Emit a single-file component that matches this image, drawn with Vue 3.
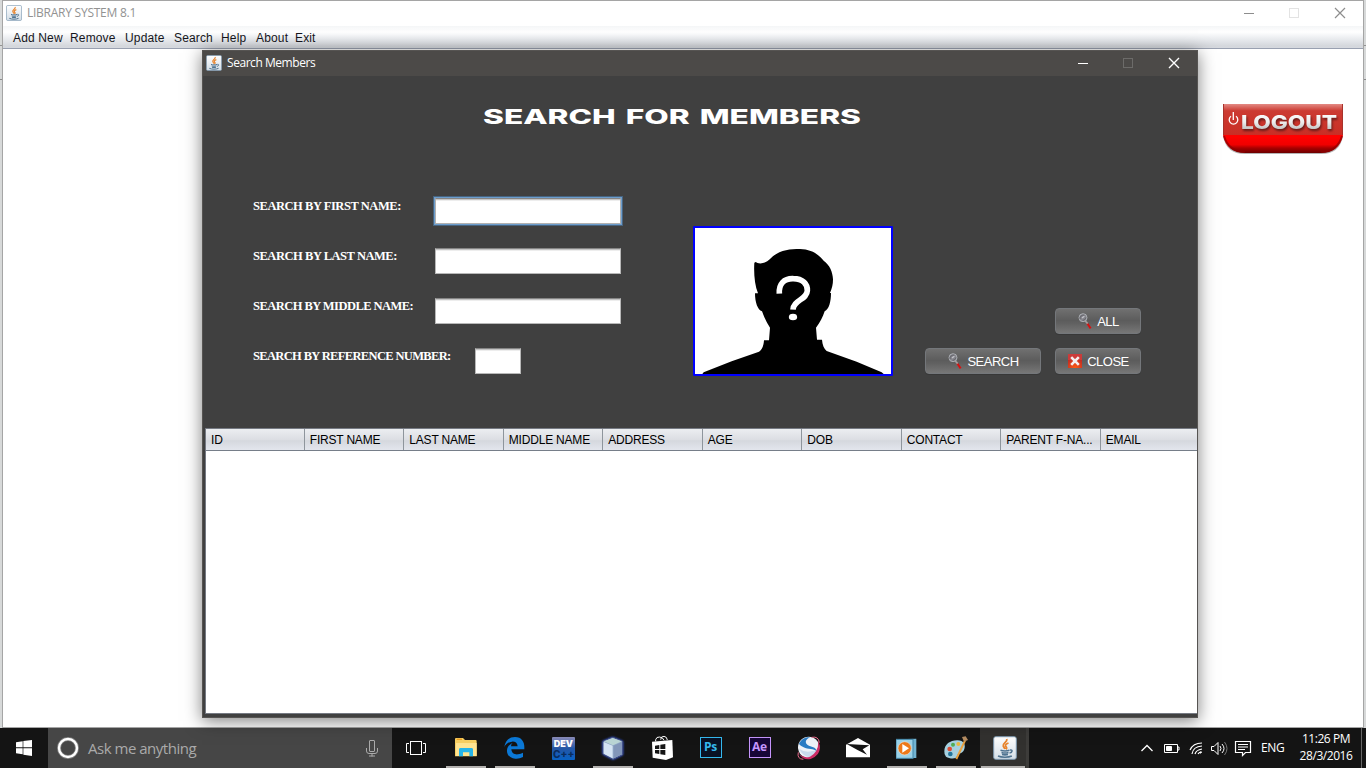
<script setup>
const menus = [
  { name: 'Add New', width: 57 },
  { name: 'Remove', width: 55 },
  { name: 'Update', width: 49 },
  { name: 'Search', width: 47 },
  { name: 'Help', width: 35 },
  { name: 'About', width: 39 },
  { name: 'Exit', width: 30 },
]
const fields = [
  { label: 'SEARCH BY FIRST NAME:', tracking: -0.45, focused: true },
  { label: 'SEARCH BY LAST NAME:', tracking: -0.46 },
  { label: 'SEARCH BY MIDDLE NAME:', tracking: -0.54 },
  { label: 'SEARCH BY REFERENCE NUMBER:', tracking: -0.65, short: true },
]
const columns = ['ID', 'FIRST NAME', 'LAST NAME', 'MIDDLE NAME', 'ADDRESS', 'AGE', 'DOB', 'CONTACT', 'PARENT F-NA...', 'EMAIL']
</script>

<template>
  <div class="desktop">
    <svg class="defs" width="0" height="0" aria-hidden="true">
      <defs>
        <linearGradient id="tile" x1="0" y1="0" x2="0" y2="1">
          <stop offset="0" stop-color="#fff" /><stop offset="1" stop-color="#d3dde6" />
        </linearGradient>
        <linearGradient id="sky" x1="0" y1="0" x2="0" y2="1">
          <stop offset="0" stop-color="#8b8cb9" /><stop offset=".5" stop-color="#2456a5" /><stop offset="1" stop-color="#0862c4" />
        </linearGradient>
        <linearGradient id="steel" x1="0" y1="0" x2="0" y2="1">
          <stop offset="0" stop-color="#fff" /><stop offset=".5" stop-color="#eee" /><stop offset="1" stop-color="#aaa" />
        </linearGradient>
        <radialGradient id="ember" cx=".5" cy="1" r=".8">
          <stop offset="0" stop-color="#ff5a10" /><stop offset="1" stop-color="#b92626" />
        </radialGradient>
        <symbol id="java" viewBox="0 0 24 24">
          <rect x=".7" y=".7" width="22.6" height="22.6" rx="2" fill="url(#tile)" stroke="#7f9cb3" stroke-width="1" />
          <path d="M13.8 3c1 3-4.6 4.200-3.600 7 .4 1.200 1.500 2 1.800 3M15.500 7c-3 1-4 2.500-2.200 4.200.6.700.3 1.400-.4 2" fill="none" stroke="#e8842c" stroke-width="1.800" />
          <path d="M7.500 14.200c2.500.8 6.500.8 9 0M8.500 16.500c2 .7 4.800.7 7 0M9 18.500c2 .5 4 .5 6 0M17 14c3-.5 2.600 2.500-.5 3M5 20c3.500 1.700 10.500 1.600 13.800 0" fill="none" stroke="#4f7390" stroke-width="1.500" />
        </symbol>
        <symbol id="lens" viewBox="0 0 42 48">
          <path d="M27 30L38 46" stroke="#d81010" stroke-width="6" />
          <path d="M22 24l7 8" stroke="#a0a0a0" stroke-width="5" />
          <circle cx="15" cy="14" r="12" fill="#85858c" stroke="#a9acb1" stroke-width="3" />
          <path d="M6 18c-1-8 5-12 13-12M14 22c5 0 8-3 9-8" fill="none" stroke="#5c5c62" stroke-width="2.500" />
          <path d="M12 15l7-5" stroke="#c5c5ca" stroke-width="3.500" />
        </symbol>
      </defs>
    </svg>

    <main class="window">
      <header class="titlebar">
        <svg class="app-icon"><use href="#java" /></svg>
        <span class="window-title">LIBRARY SYSTEM 8.1</span>
        <svg class="controls" width="102" height="12" viewBox="0 0 102 12" fill="none">
          <path d="M0 6.500h10" stroke="#8d8d8d" />
          <rect x="45.500" y="1.500" width="9" height="9" stroke="#e3e3e3" />
          <path d="M91 1l10 10M101 1L91 11" stroke="#8d8d8d" stroke-width="1.200" />
        </svg>
      </header>
      <nav class="menubar">
        <span v-for="m in menus" :key="m.name" :style="{ width: m.width + 'px' }">{{ m.name }}</span>
      </nav>
      <div class="workspace">
        <button class="logout" aria-label="Logout">
          <svg width="120" height="50" viewBox="0 0 120 50">
            <defs>
              <linearGradient id="bottom" x1="0" y1="0" x2="0" y2="1">
                <stop offset="0" stop-color="#f00" /><stop offset=".68" stop-color="#f00" /><stop offset=".83" stop-color="#f00000" /><stop offset=".9" stop-color="#a80000" /><stop offset="1" stop-color="#6c0000" />
              </linearGradient>
              <linearGradient id="gloss" x1="0" y1="0" x2="0" y2="1">
                <stop offset="0" stop-color="#e38a84" /><stop offset=".22" stop-color="#cc3b32" /><stop offset="1" stop-color="#c92e25" />
              </linearGradient>
            </defs>
            <path d="M0 0H120V32Q117 50 98 50H22Q3 50 0 32Z" fill="#777" opacity=".55" />
            <path d="M0 0H120V31Q116 49 98 49H22Q4 49 0 31Z" fill="url(#bottom)" />
            <path d="M1 32Q5 47 22 48M119 32Q115 47 98 48" fill="none" stroke="#8e0000" stroke-width="2" opacity=".7" />
            <path d="M0 0H120V31H0Z" fill="url(#gloss)" />
            <path d="M.5 0V31M119.500 0V31" stroke="#a8322b" />
            <path d="M8 12.300a4.300 4.300 0 1 0 5 0M10.300 8v8" fill="none" stroke="#fff" stroke-width="1.300" />
            <text class="logout-text" x="18" y="24.500" textLength="96" lengthAdjust="spacingAndGlyphs">LOGOUT</text>
          </svg>
        </button>
      </div>
    </main>

    <section class="dialog">
      <header class="dialog-bar">
        <svg class="app-icon"><use href="#java" /></svg>
        <span class="dialog-title">Search Members</span>
        <svg class="controls" width="102" height="12" viewBox="0 0 102 12" fill="none">
          <path d="M0 6.500h10" stroke="#fff" />
          <rect x="45.500" y="1.500" width="9" height="9" stroke="#6c6b69" />
          <path d="M91 1l10 10M101 1L91 11" stroke="#fff" stroke-width="1.400" />
        </svg>
      </header>
      <h1 class="heading">
        <svg width="380" height="24" viewBox="0 0 380 24">
          <text x="0" y="20" textLength="378" lengthAdjust="spacingAndGlyphs">SEARCH FOR MEMBERS</text>
        </svg>
      </h1>
      <div class="search-area">
        <form class="fields" @submit.prevent>
          <label v-for="f in fields" :key="f.label" class="field" :class="{ short: f.short }">
            <span :style="{ letterSpacing: f.tracking + 'px' }">{{ f.label }}</span>
            <input type="text" :class="{ focused: f.focused }" />
          </label>
        </form>
        <svg class="photo" viewBox="30 24 588 438" preserveAspectRatio="none">
          <path d="M52 462L56 457L140 424L222 395C233 389 236 374 237 361H252L255 323C243 304 238 292 231 274C218 270 210 247 210 220H219C209 195 206 160 208 128L212 126Q217 131 230 130C242 128 251 122 262 110C287 90 315 87 345 87C376 88 397 99 416 122C434 135 443 155 444 178C444 194 441 204 435 219H438C438 245 432 268 419 274C413 292 406 306 393 323L396 359H411C412 374 417 386 425 393L515 425L590 457L596 462Z" />
          <path d="M283 221C281 192 297 175 325 176C353 176 368 192 367 212C366 239 325 240 324 269" fill="none" stroke="#fff" stroke-width="17" />
          <ellipse cx="324" cy="291" rx="12.500" ry="10" fill="#fff" />
        </svg>
        <div class="actions">
          <button class="btn all"><svg><use href="#lens" /></svg><span>ALL</span></button>
          <button class="btn find"><svg><use href="#lens" /></svg><span>SEARCH</span></button>
          <button class="btn close">
            <svg viewBox="0 0 14 14">
              <rect width="14" height="14" fill="url(#ember)" />
              <path d="M0 0h14v6H0z" fill="#d74a48" opacity=".6" />
              <path d="M3.200 3.200l7.600 7.600M10.800 3.200l-7.600 7.600" stroke="#f3eeee" stroke-width="2.600" />
            </svg>
            <span>CLOSE</span>
          </button>
        </div>
      </div>
      <div class="table">
        <div class="table-head">
          <span v-for="c in columns" :key="c">{{ c }}</span>
        </div>
      </div>
    </section>

    <footer class="taskbar">
      <div class="start">
        <svg width="16" height="16" viewBox="0 0 48 48" fill="#fff"><path d="M0 7L20 4V22H0zM22 3L48 0V22H22zM0 25H20V43L0 40zM22 25H48V48L22 44z" /></svg>
      </div>
      <div class="cortana">
        <svg width="22" height="22" viewBox="0 0 22 22"><circle cx="11" cy="11" r="9" fill="none" stroke="#bbb" stroke-width="4" opacity=".45" /><circle cx="11" cy="11" r="9" fill="none" stroke="#fff" stroke-width="2.400" /></svg>
        <span>Ask me anything</span>
        <svg class="mic" width="12" height="17" viewBox="0 0 12 17" fill="none" stroke="#aaa"><rect x="3.500" y=".5" width="5" height="11" rx=".5" /><path d="M.5 8v3q0 2.500 2.500 2.500h6q2.500 0 2.500-2.500V8M6 13.500v3M3 16h6" /></svg>
      </div>
      <div class="task view">
        <svg width="20" height="14" viewBox="0 0 20 14" fill="none" stroke="#fff"><rect x="4.500" y=".5" width="11" height="13" /><path d="M3 2.500H.5v9H3M17 2.500h2.500v9H17" /></svg>
      </div>
      <div class="task run">
        <svg width="22" height="20" viewBox="0 0 66 60"><path d="M0 3Q0 0 3 0H24L30 6H62Q65 6 65 10V55H0z" fill="#f7cf62" /><path d="M3 15H65V54H3z" fill="#ffe491" /><path d="M5 4h16" stroke="#ed9f22" stroke-width="4" /><path d="M12 55V34Q12 30 17 30H49Q54 30 54 34V55H43V43H24V55z" fill="#26b5e9" /></svg>
      </div>
      <div class="task run">
        <svg width="21" height="22" viewBox="0 0 63 66"><path d="M1 30C4 11 15 0 33 0C53 0 61 15 61 30V37H22C23 49 32 53 42 52Q51 51 57 47V60Q46 66 34 65C16 64 8 51 9 39C10 28 20 20 26 18Q21 21 21 28H41C40 17 32 13 24 14C13 15 5 22 1 30Z" fill="#0b78d6" /></svg>
      </div>
      <div class="task">
        <svg width="23" height="23" viewBox="0 0 69 69"><rect width="69" height="69" rx="3" fill="url(#sky)" /><text x="5" y="31" textLength="58" lengthAdjust="spacingAndGlyphs" font-size="27" font-weight="900" fill="#fff" font-family="Inter, sans-serif">DEV</text><text x="3" y="64" textLength="64" lengthAdjust="spacingAndGlyphs" font-size="31" font-weight="800" fill="#0a2c5d" font-family="Inter, sans-serif">C++</text></svg>
      </div>
      <div class="task run">
        <svg class="cube" width="22" height="23" viewBox="0 0 66 69"><path d="M3 13L32 1L62 13V53L33 67L3 51Z" fill="#8fa6c6" stroke="#3c4983" stroke-width="3" /><path d="M5 13L32 3L60 13L33 25Z" fill="#b9d4d4" /><path d="M5 15L32 26V64L5 50Z" fill="#d4e3f3" /><path d="M35 26L60 15V51L35 64Z" fill="#8296b9" /></svg>
      </div>
      <div class="task">
        <svg width="22" height="24" viewBox="0 0 66 72"><path d="M3 17L64 12L66 64L45 72L5 65Z" fill="#fff" /><path d="M14 16V11Q16 2 26 3T39 13M29 11Q30 0 39 1T49 12" fill="none" stroke="#fff" stroke-width="3" /><path d="M12 29L25 27V39H12zM28 26L43 24V39H28zM12 42H25V54L12 52zM28 42H43V57L28 55z" fill="#151515" /></svg>
      </div>
      <div class="task"><span class="adobe ps">Ps</span></div>
      <div class="task"><span class="adobe ae">Ae</span></div>
      <div class="task">
        <svg width="24" height="24" viewBox="0 0 72 72"><circle cx="35" cy="34" r="32" fill="#eef2f8" /><path d="M6 24C12 9 27 1 41 4C26 8 22 20 32 27C42 34 57 31 60 47C50 37 33 41 20 34Q10 29 6 24" fill="#2a7cc4" /><path d="M6 38Q24 51 46 45Q55 42 60 47Q54 62 39 64Q17 61 6 38" fill="#c9d9ec" /><path d="M64 14Q80 55 41 69Q19 74 6 54Q20 68 39 62Q65 49 64 14" fill="#cc2b65" /><path d="M44 4Q65 0 67 20M4 49Q-1 69 19 70" fill="none" stroke="#e86c8c" stroke-width="3" /></svg>
      </div>
      <div class="task">
        <svg width="24" height="20" viewBox="0 0 72 60"><path d="M0 20L36 0L72 20V58H0Z" fill="#fff" /><path d="M2 18L70 22L50 34L63 50L36 37Z" fill="#151515" /></svg>
      </div>
      <div class="task run">
        <svg width="21" height="21" viewBox="0 0 63 63"><path d="M8 4L61 2V60H8Z" fill="#72b4d2" /><rect y="4" width="51" height="57" fill="#9bd2e8" stroke="#4386a8" stroke-width="3" /><circle cx="26" cy="31" r="20" fill="#ed7919" stroke="#e7e4da" stroke-width="2" /><path d="M19 18V44L39 31Z" fill="#fff" /></svg>
      </div>
      <div class="task run">
        <svg width="24" height="24" viewBox="0 0 72 72"><path d="M1 46C1 24 20 12 41 13C59 13 67 27 60 42C55 55 40 50 39 61C37 70 17 69 6 62Q0 56 1 46" fill="#a6d0df" /><circle cx="17" cy="39" r="7" fill="#dd4d35" /><circle cx="27" cy="26" r="6" fill="#50ad54" /><circle cx="43" cy="24" r="6" fill="#eab740" /><circle cx="19" cy="54" r="7" fill="#23769d" /><path d="M63 14L37 69" stroke="#e9a13f" stroke-width="6" /><path d="M54 3L65 1L72 12L60 17Z" fill="#b58c61" /></svg>
      </div>
      <div class="task active"><svg width="24" height="24"><use href="#java" /></svg></div>
      <div class="tray">
        <svg width="128" height="40" viewBox="0 0 128 40" fill="none" stroke="#fff">
          <path d="M8.500 23L14 17.500L19.500 23" stroke-width="1.300" />
          <path d="M31.500 16.500h13v8h-13zM45 19h1v3h-1" /><path d="M33.500 18.500h5v4h-5z" fill="#fff" />
          <path d="M57 22Q60 15 69 15M59 26Q60 18.500 69 18M62 26Q63 22 69 21M65 26Q66 24 69 24" stroke-width="1.200" /><path d="M67 24h1v1h-1z" fill="#fff" />
          <path d="M78.500 18.500h2.500l4-4v12l-4-4h-2.500zM87 18q2 2.500 0 5M89 16q4 4.500 0 9" /><path d="M91.500 14q5 6.500 0 13" stroke="#777" />
          <path d="M102.500 13.500h15v11h-5l-3 3v-3h-7zM105 16.500h10M105 19h10M105 21.500h7" stroke-width="1.200" />
        </svg>
        <span class="lang">ENG</span>
        <span class="clock"><span>11:26 PM</span><span>28/3/2016</span></span>
      </div>
    </footer>
  </div>
</template>

<style>
html, body { margin: 0; overflow: hidden; }
</style>

<style scoped>
* { box-sizing: border-box; }
.desktop {
  position: relative; width: 1366px; height: 768px; overflow: hidden;
  background: linear-gradient(transparent 45px, #929292 45px, #929292 46px, transparent 46px, transparent 79px, #8b8b8b 79px, #8b8b8b 80px, transparent 80px) #d7d9d9;
  font: 12px "Liberation Sans", Arial, sans-serif; display: flex; flex-direction: column; padding-left: 2px;
}
.defs { position: absolute; }
button, input { font: inherit; border: 0; padding: 0; margin: 0; }
svg { display: block; flex: none; }
.window { width: 1362px; height: 728px; border: 1px solid #a5a5a5; background: #fff; display: flex; flex-direction: column; flex: none; }
.titlebar { height: 25px; display: flex; align-items: center; padding: 0 0 1px 3px; }
.app-icon { width: 16px; height: 16px; }
.window-title { font: 12px "Open Sans", "Noto Sans", sans-serif; color: #929292; margin-left: 5px; letter-spacing: -.25px; line-height: 24px; }
.controls { margin-left: auto; }
.titlebar .controls { margin-right: 17px; }
.menubar { height: 23px; flex: none; display: flex; padding: 1px 0 0 10px; color: #16161c; line-height: 22px; letter-spacing: .15px; background: linear-gradient(#f4f6f7 0, #fff 6px, #eceef1 12px, #d4d7dc 20px, #d6d9df 22px); border-bottom: 1px solid #99a0b0; }
.workspace { flex: 1; display: flex; justify-content: flex-end; padding: 55px 20px 0 0; }
.logout { width: 120px; height: 50px; background: none; }
.logout-text { font: 800 19px Inter, sans-serif; fill: url(#steel); filter: drop-shadow(1px 2px 1px #651b18); }

.dialog { position: absolute; left: 202px; top: 50px; width: 996px; height: 668px; background: #404040; border: 1px solid #565452; box-shadow: 0 3px 16px rgba(0, 0, 0, .5); display: flex; flex-direction: column; }
.dialog-bar { height: 25px; flex: none; display: flex; align-items: center; padding: 0 0 2px 3px; background: #4c4a48; }
.dialog-title { font: 12px/23px "Open Sans", "Noto Sans", sans-serif; color: #fff; margin-left: 5px; letter-spacing: -.45px; }
.dialog-bar .controls { margin-right: 17px; }
.heading { margin: 28px 0 0 280px; height: 24px; flex: none; }
.heading text { font: 800 20.500px Inter, sans-serif; fill: #fff; word-spacing: 2px; }
.search-area { display: flex; height: 300px; flex: none; }
.fields { width: 490px; padding: 70px 0 0 50px; display: flex; flex-direction: column; gap: 24px; }
.field { height: 26px; display: flex; }
.field span { width: 182px; font: bold 12.500px/17px "Liberation Serif", serif; color: #fff; white-space: nowrap; }
.field input { width: 186px; height: 26px; background: #fff; border: 1px solid #b8b8b8; border-top-color: #858585; box-shadow: inset 0 1px #c5c5c5, inset 0 2px #ededed; outline: none; }
.field input.focused { border: 1px solid #b0b0b0; border-top-color: #858585; box-shadow: 0 0 0 1px #6c9dcd, 0 0 0 2px #48647f, inset 0 1px #c5c5c5, inset 0 2px #ededed; }
.field.short span { width: 222px; }
.field.short input { width: 46px; }
.photo { width: 200px; height: 150px; margin-top: 98px; border: 2px solid #00f; background: #fff; border-radius: 1px; }
.actions { margin: 180px 0 0 32px; width: 216px; height: 66px; display: grid; grid-template-columns: 116px 86px; gap: 14px; grid-template-rows: 26px 26px; }
.all { grid-column: 2; }
.btn { display: flex; align-items: center; justify-content: center; gap: 5px; height: 26px; color: #fff; font-size: 13px; letter-spacing: -.5px; border: 1px solid #74777b; border-radius: 4px; background: linear-gradient(#707070, #5c5c5c 48%, #616161 60%, #777 100%); box-shadow: 0 1px #383838; }
.btn svg { width: 14px; height: 16px; margin-left: 1px; }
.btn.close svg { height: 14px; }
.btn span { line-height: 24px; padding-top: 2px; }
.table { height: 286px; flex: none; margin: 0 0 0 2px; background: #fff; border: 1px solid #767a83; border-right: 0; overflow: hidden; }
.table-head { height: 22px; display: flex; background: linear-gradient(#eceef1, #dcdee3 50%, #d5d8de 56%, #e3e6ed 100%); border-bottom: 1px solid #767e89; }
.table-head span { flex: 0 0 99.500px; min-width: 0; border-right: 1px solid #8e959c; padding: 1px 0 0 5px; line-height: 20px; color: #000; letter-spacing: -.2px; white-space: nowrap; }
.table-head span:first-child { flex-basis: 98.800px; }
.table-head span:last-child { border: 0; }

.taskbar { height: 40px; margin-left: -2px; display: flex; background: #141414; flex: none; }
.start { width: 48px; display: flex; align-items: center; justify-content: center; }
.cortana { width: 344px; display: flex; align-items: center; background: #464646; padding-left: 9px; font: 15px "Open Sans", "Noto Sans", sans-serif; color: #aaa; }
.cortana span { margin-left: 9px; letter-spacing: -.48px; }
.mic { margin: 0 14px 0 auto; }
.task { width: 49px; height: 40px; flex: none; display: flex; align-items: center; justify-content: center; }
.task.view { padding-right: 1px; }
.task.run { background: linear-gradient(#b4b2b0, #b4b2b0) 50% 100% / 40px 2px no-repeat; }
.task.active { background: linear-gradient(#b4b2b0, #b4b2b0) 1px 100% / 44px 2px no-repeat, #32312f; border-right: 3px solid #3d3c3a; padding-left: 3px; }
.cube { filter: drop-shadow(0 0 1px #355be0); }
.adobe { width: 22px; height: 21px; border: 1px solid; font: bold 12px/18px "Open Sans", sans-serif; text-align: center; margin-bottom: 2px; letter-spacing: -.3px; }
.ps { color: #35b9ee; background: #091225; }
.ae { color: #c595fc; background: #170637; }
.tray { margin-left: auto; width: 233px; display: flex; color: #fff; font: 12px "Open Sans", "Noto Sans", sans-serif; border-right: 1px solid #666; margin-right: 4px; padding-left: 4px; }
.lang { width: 32px; line-height: 40px; letter-spacing: -.3px; }
.clock { width: 66px; display: flex; flex-direction: column; align-items: center; line-height: 17px; padding-top: 2px; letter-spacing: -.45px; }
</style>
